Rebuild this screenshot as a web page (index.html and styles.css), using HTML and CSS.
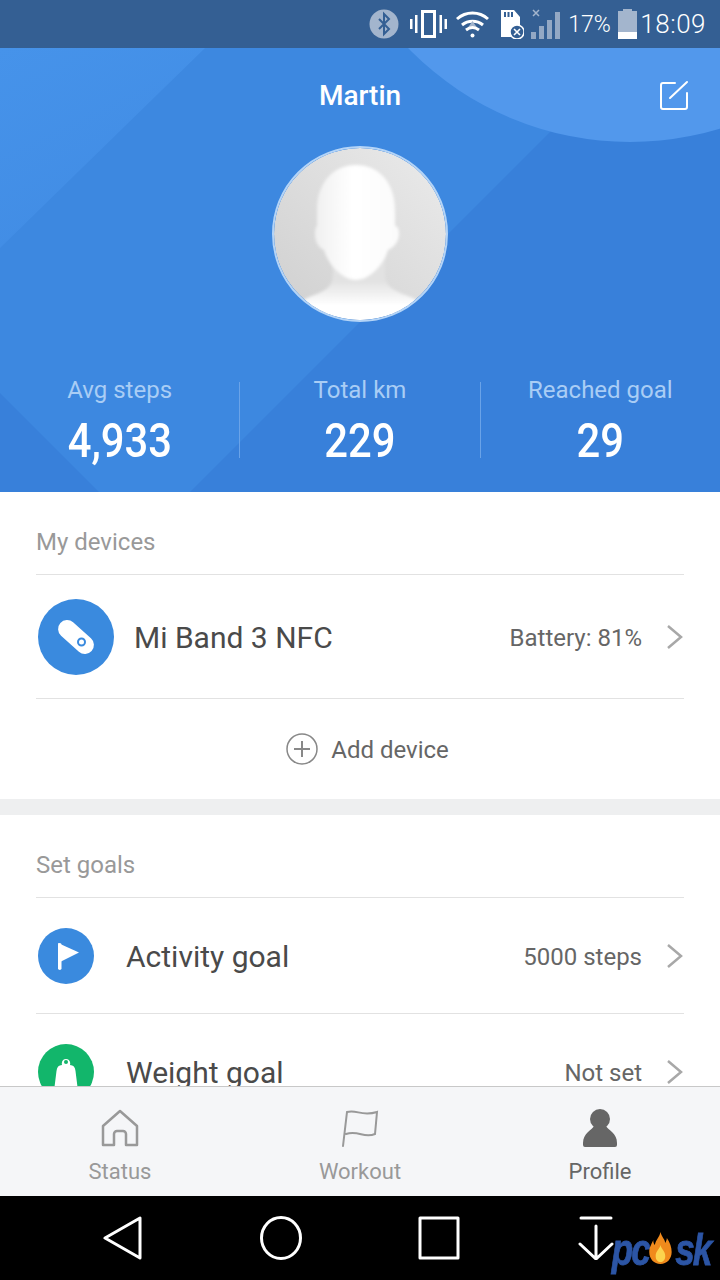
FILE: index.html
```html
<!DOCTYPE html>
<html lang="en">
<head>
    <meta charset="UTF-8">
    <meta name="viewport" content="width=device-width, initial-scale=1.0">
    <title>Profile</title>
    <link rel="stylesheet" href="styles.css">
</head>
<body>
    <div class="status-bar">
        <svg class="st-bt" width="30" height="30" viewBox="0 0 30 30"><circle cx="15" cy="15" r="14.500" fill="#a3b5cd"/><path d="M10 10l10 10-5 5V5l5 5-10 10" fill="none" stroke="#345f93" stroke-width="2"/></svg>
        <svg class="st-vib" width="37" height="30" viewBox="0 0 37 30" fill="#fff"><path d="M11 1h15v28H11zM14 4v22h9V4z" fill-rule="evenodd"/><rect x="0" y="10" width="2.500" height="10"/><rect x="5" y="6" width="2.500" height="18"/><rect x="29.500" y="6" width="2.500" height="18"/><rect x="34.500" y="10" width="2.500" height="10"/></svg>
        <svg class="st-wifi" width="33" height="28" viewBox="0 0 33 28" fill="none" stroke="#fff" stroke-width="3"><path d="M1 9c9-8 22-8 31 0"/><path d="M6 15c6-5 15-5 21 0"/><path d="M11 19l5.500-8 5.500 8z" fill="#a3b5cd" stroke="none"/><path d="M10 20c4-3 9-3 13 0"/><circle cx="16.500" cy="25.500" r="2" fill="#fff" stroke="none"/></svg>
        <svg class="st-sd" width="23" height="30" viewBox="0 0 23 30"><path d="M0 1h13l6 7v20H0z" fill="#fff"/><path d="M3 3h2v5H3zM6.500 3h2v5h-2zM10 3h2v5h-2z" fill="#345f93"/><circle cx="16" cy="23" r="7" fill="#345f93" stroke="#fff" stroke-width="1.500"/><path d="M13 20l6 6M19 20l-6 6" stroke="#fff" stroke-width="1.600"/></svg>
        <svg class="st-signal" width="30" height="32" viewBox="0 0 30 32" fill="#93a8c4"><path d="M2 2l6 6M8 2L2 8" stroke="#a3b5cd" stroke-width="1.500"/><rect x="0" y="24" width="5" height="7"/><rect x="8" y="18" width="5" height="13"/><rect x="16" y="12" width="5" height="19"/><rect x="24" y="4" width="5" height="27"/></svg>
        <span class="st-pct">17%</span>
        <svg class="st-batt" width="19" height="30" viewBox="0 0 19 30"><path d="M5 0h9v2h5v28H0V2h5z" fill="#a3b5cd"/><rect y="23" width="19" height="7" fill="#fff"/></svg>
        <span class="st-time">18:09</span>
    </div>

    <div class="content">
        <header class="profile-header">
            <svg class="header-bg" width="720" height="444" viewBox="0 0 720 444">
                <defs>
                    <linearGradient id="cornerFill" x1="0" y1="0" x2="0.500" y2="1"><stop offset="0" stop-color="#4693ea"/><stop offset="1" stop-color="#418ce4"/></linearGradient>
                </defs>
                <path d="M0 0H205L0 200z" fill="url(#cornerFill)"/>
                <path d="M190 444L720 -86V444z" fill="#3880da"/>
                <path d="M0 345L99 444H0z" fill="#3880da"/>
                <circle cx="630" cy="-215" r="309" fill="#5298ec"/>
            </svg>
            <div class="profile-top">
                <h1>Martin</h1>
                <svg class="edit-icon" width="30" height="30" viewBox="0 0 30 30" fill="none" stroke="#fff" stroke-width="2" stroke-linecap="round"><path d="M16 3H4a2 2 0 0 0-2 2v22a2 2 0 0 0 2 2h22a2 2 0 0 0 2-2V13"/><path d="M11 18L28 2"/></svg>
            </div>
            <div class="avatar">
                <svg width="172" height="172" viewBox="0 0 172 172">
                    <defs>
                        <linearGradient id="avatarBg" x1="0" y1="1" x2="1" y2="0"><stop offset="0" stop-color="#cfcfcf"/><stop offset="1" stop-color="#ebebeb"/></linearGradient>
                        <linearGradient id="headFill" x1="0" y1="0" x2="1" y2="0"><stop offset="0" stop-color="#f0f0f0"/><stop offset="0.450" stop-color="#fff"/><stop offset="1" stop-color="#fbfbfb"/></linearGradient>
                        <linearGradient id="bodyFill" x1="0" y1="0" x2="0" y2="1"><stop offset="0.400" stop-color="#e2e2e2"/><stop offset="0.750" stop-color="#fff"/></linearGradient>
                        <filter id="soft"><feGaussianBlur stdDeviation="1.500"/></filter>
                        <clipPath id="avatarClip"><circle cx="86" cy="86" r="86"/></clipPath>
                    </defs>
                    <g clip-path="url(#avatarClip)">
                        <rect width="172" height="172" fill="url(#avatarBg)"/>
                        <path d="M0 175L33 150C50 143 59 141 59 125V105H111V125C111 141 122 143 139 150L172 175z" fill="url(#bodyFill)" filter="url(#soft)"/>
                        <path d="M82 17C104 17 121 34 121 62V78C124 78 125 82 125 86 125 94 119 100 114 102 110 116 96 132 82 132 68 132 54 116 50 102 45 100 41 94 41 86 41 82 42 78 43 78V62C43 34 60 17 82 17z" fill="url(#headFill)" filter="url(#soft)"/>
                    </g>
                </svg>
            </div>
            <div class="stats">
                <div class="stat">
                    <span class="stat-label">Avg steps</span>
                    <span class="stat-value">4,933</span>
                </div>
                <div class="stat">
                    <span class="stat-label">Total km</span>
                    <span class="stat-value">229</span>
                </div>
                <div class="stat">
                    <span class="stat-label">Reached goal</span>
                    <span class="stat-value">29</span>
                </div>
            </div>
        </header>

        <section class="card devices">
            <h2 class="card-title">My devices</h2>
            <div class="row device-row">
                <span class="round-icon blue">
                    <svg width="76" height="76" viewBox="0 0 76 76"><rect x="17" y="29" width="42" height="18" rx="9" transform="rotate(42 38 38)" fill="#fff"/><circle cx="43.500" cy="43" r="3.500" fill="none" stroke="#3a8ade" stroke-width="2"/></svg>
                </span>
                <span class="row-name">Mi Band 3 NFC</span>
                <span class="row-value">Battery: 81%</span>
                <svg class="chevron" width="18" height="26" viewBox="0 0 18 26" fill="none" stroke="#a8a8a8" stroke-width="2.500"><path d="M2 2l13 11L2 24"/></svg>
            </div>
            <div class="add-device">
                <svg width="32" height="32" viewBox="0 0 32 32" fill="none" stroke="#888" stroke-width="1.500"><circle cx="16" cy="16" r="15"/><path d="M8 16h16M16 8v16" stroke-width="2"/></svg>
                <span>Add device</span>
            </div>
        </section>

        <section class="card goals">
            <h2 class="card-title">Set goals</h2>
            <div class="row goal-row">
                <span class="round-icon blue">
                    <svg width="56" height="56" viewBox="0 0 56 56" fill="#fff"><path d="M20 15l21 9.500L22 34z"/><rect x="20" y="15" width="3.500" height="27" rx="1.750"/></svg>
                </span>
                <span class="row-name">Activity goal</span>
                <span class="row-value">5000 steps</span>
                <svg class="chevron" width="18" height="26" viewBox="0 0 18 26" fill="none" stroke="#a8a8a8" stroke-width="2.500"><path d="M2 2l13 11L2 24"/></svg>
            </div>
            <div class="row goal-row">
                <span class="round-icon green">
                    <svg width="56" height="56" viewBox="0 0 56 56"><path d="M16.500 43L18.500 27Q19 21 24 21C22 13 34 13 32 21Q37 21 37.500 27L39.500 43z" fill="#fff"/><circle cx="28" cy="18" r="2" fill="#12b66b"/></svg>
                </span>
                <span class="row-name">Weight goal</span>
                <span class="row-value">Not set</span>
                <svg class="chevron" width="18" height="26" viewBox="0 0 18 26" fill="none" stroke="#a8a8a8" stroke-width="2.500"><path d="M2 2l13 11L2 24"/></svg>
            </div>
        </section>
    </div>

    <nav class="tab-bar">
        <div class="tab">
            <svg width="38" height="38" viewBox="0 0 38 38" fill="none" stroke="#999" stroke-width="2.500" stroke-linejoin="round"><path d="M2 17L19 2l17 15v19H25V25a3 3 0 0 0-3-3h-6a3 3 0 0 0-3 3v11H2z"/></svg>
            <span>Status</span>
        </div>
        <div class="tab">
            <svg width="38" height="38" viewBox="0 0 38 38" fill="none" stroke="#999" stroke-width="2" stroke-linecap="round"><path d="M2 37L6 3c10-3 14 5 30 0l-2 22c-11 5-16-4-29 0"/></svg>
            <span>Workout</span>
        </div>
        <div class="tab active">
            <svg width="38" height="38" viewBox="0 0 38 38" fill="#666"><circle cx="19" cy="10" r="10"/><path d="M13 17h12c2 4 11 7 11 17v2a2 2 0 0 1-2 2H4a2 2 0 0 1-2-2v-2c0-10 9-13 11-17z"/></svg>
            <span>Profile</span>
        </div>
    </nav>

    <div class="nav-bar">
        <svg width="40" height="44" viewBox="0 0 40 44" fill="none" stroke="#fff" stroke-width="3" stroke-linejoin="round"><path d="M37 2v40L2 22z"/></svg>
        <svg width="42" height="44" viewBox="0 0 42 44" fill="none" stroke="#fff" stroke-width="3"><ellipse cx="21" cy="22" rx="19.500" ry="20.500"/></svg>
        <svg width="42" height="44" viewBox="0 0 42 44" fill="none" stroke="#fff" stroke-width="3" stroke-linejoin="round"><rect x="2" y="2" width="38" height="40"/></svg>
        <svg width="40" height="44" viewBox="0 0 40 44" fill="none" stroke="#fff" stroke-width="3" stroke-linecap="round" stroke-linejoin="round"><path d="M4 2h30M19 10v33M3 28l16 15 16-15"/></svg>
        <span class="watermark">pc<svg class="flame" width="30" height="32" viewBox="0 0 30 32"><path d="M15 0c2 6 5 6 6 11 1-2 2-3 2-5 4 5 6 9 6 14 0 7-6 12-14 12S1 27 1 20c0-5 3-8 5-12 0 3 1 4 2 5 1-5 6-8 7-13z" fill="#f08a1c"/><path d="M15 13c1 4 6 6 6 11 0 4-3 6-6 6s-6-2-6-6c0-5 5-7 6-11z" fill="#fcd34d"/></svg>sk</span>
    </div>
</body>
</html>
```
FILE: styles.css
```css
* {
    box-sizing: border-box;
}

body {
    font-family: 'Roboto', sans-serif;
    margin: 0;
    width: 720px;
    height: 1280px;
    display: flex;
    flex-direction: column;
    overflow: hidden;
    background-color: #fff;
}

.status-bar {
    height: 48px;
    flex: none;
    display: flex;
    align-items: center;
    justify-content: flex-end;
    padding-right: 14px;
    background-color: #345f93;
    color: #fff;
}

.st-vib {
    margin-left: 11px;
}

.st-wifi {
    margin-left: 9px;
}

.st-sd {
    margin-left: 12px;
}

.st-signal {
    margin-left: 7px;
}

.st-pct {
    font-size: 23px;
    font-weight: 300;
    width: 40px;
    margin-left: 7px;
    white-space: nowrap;
}

.st-batt {
    margin-left: 10px;
}

.st-time {
    font-size: 26px;
    font-weight: 300;
    letter-spacing: 0.5px;
    margin-left: 3px;
}

.content {
    flex: 1;
    overflow: hidden;
}

.profile-header {
    position: relative;
    height: 444px;
    overflow: hidden;
    background-color: #3d88e0;
    color: #fff;
    display: flex;
    flex-direction: column;
    align-items: center;
}

.header-bg {
    position: absolute;
    top: 0;
    left: 0;
}

.profile-top {
    position: relative;
    width: 100%;
    height: 94px;
    display: flex;
    align-items: center;
    justify-content: center;
}

.profile-top h1 {
    font-size: 28px;
    font-weight: 500;
    margin: 0;
}

.edit-icon {
    position: absolute;
    right: 31px;
    top: 32px;
}

.avatar {
    position: relative;
    width: 176px;
    height: 176px;
    border: 2px solid #b4d4f7;
    border-radius: 50%;
    overflow: hidden;
    margin-top: 4px;
}

.avatar svg {
    display: block;
}

.stats {
    position: relative;
    width: 100%;
    margin-top: 60px;
    display: flex;
}

.stat {
    flex: 1;
    height: 76px;
    display: flex;
    flex-direction: column;
    align-items: center;
    border-right: 1px solid #6aa3e8;
}

.stat:last-child {
    border-right: none;
}

.stat-label {
    font-size: 24px;
    line-height: 16px;
    color: #a9cdf5;
}

.stat-value {
    font-size: 48px;
    font-weight: 500;
    line-height: 50px;
    margin-top: 18px;
    transform: scaleX(0.87);
}

.card {
    padding: 0 36px;
    background-color: #fff;
}

.devices {
    height: 307px;
}

.goals {
    border-top: 16px solid #eeeff0;
}

.card-title {
    font-size: 24px;
    font-weight: 400;
    color: #999;
    margin: 0;
    height: 83px;
    padding-top: 35px;
    line-height: 30px;
    border-bottom: 1px solid #e2e2e2;
}

.row {
    display: flex;
    align-items: center;
    border-bottom: 1px solid #e2e2e2;
}

.device-row {
    height: 124px;
}

.goal-row {
    height: 116px;
}

.round-icon {
    flex: none;
    border-radius: 50%;
    display: flex;
    margin-left: 2px;
}

.round-icon.blue {
    background-color: #3a8ade;
}

.round-icon.green {
    background-color: #12b66b;
}

.row-name {
    flex: 1;
    font-size: 30px;
    color: #4a4a4a;
    margin-left: 32px;
    padding-top: 2px;
}

.device-row .row-name {
    margin-left: 20px;
}

.row-value {
    font-size: 24px;
    color: #666;
    margin-right: 24px;
    padding-top: 2px;
}

.chevron {
    flex: none;
}

.add-device {
    height: 100px;
    display: flex;
    align-items: center;
    justify-content: center;
    gap: 13px;
    padding-left: 15px;
    font-size: 24px;
    color: #666;
}

.add-device span {
    padding-top: 2px;
}

.tab-bar {
    position: relative;
    height: 110px;
    flex: none;
    display: flex;
    background-color: #f5f6f8;
    border-top: 1px solid #c8c8c8;
}

.tab {
    flex: 1;
    display: flex;
    flex-direction: column;
    align-items: center;
    padding-top: 22px;
    font-size: 22px;
    color: #999;
}

.tab span {
    margin-top: 12px;
}

.tab.active {
    color: #666;
}

.nav-bar {
    position: relative;
    height: 84px;
    flex: none;
    background-color: #000;
    display: flex;
    align-items: center;
    padding: 0 103px;
    justify-content: space-between;
}

/* site watermark sits over the last nav button */
.watermark {
    position: absolute;
    right: 10px;
    top: 32px;
    display: flex;
    align-items: center;
    font-family: 'Liberation Sans', sans-serif;
    font-size: 44px;
    line-height: 44px;
    font-weight: 700;
    font-style: italic;
    letter-spacing: -2.500px;
    color: #2c55a5;
    -webkit-text-stroke: 0.8px #2c55a5;
    transform: scaleX(0.8);
    transform-origin: right center;
}

.flame {
    flex: none;
    margin: -4px 3px 0 0;
}
```
